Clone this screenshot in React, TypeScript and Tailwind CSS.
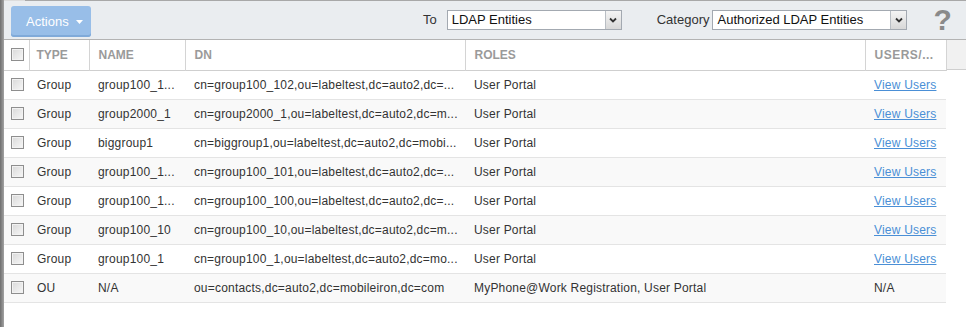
import React from "react";

const rows = [
  { type: "Group", name: "group100_1...", dn: "cn=group100_102,ou=labeltest,dc=auto2,dc=...", roles: "User Portal", link: true },
  { type: "Group", name: "group2000_1", dn: "cn=group2000_1,ou=labeltest,dc=auto2,dc=m...", roles: "User Portal", link: true },
  { type: "Group", name: "biggroup1", dn: "cn=biggroup1,ou=labeltest,dc=auto2,dc=mobi...", roles: "User Portal", link: true },
  { type: "Group", name: "group100_1...", dn: "cn=group100_101,ou=labeltest,dc=auto2,dc=...", roles: "User Portal", link: true },
  { type: "Group", name: "group100_1...", dn: "cn=group100_100,ou=labeltest,dc=auto2,dc=...", roles: "User Portal", link: true },
  { type: "Group", name: "group100_10", dn: "cn=group100_10,ou=labeltest,dc=auto2,dc=m...", roles: "User Portal", link: true },
  { type: "Group", name: "group100_1", dn: "cn=group100_1,ou=labeltest,dc=auto2,dc=mo...", roles: "User Portal", link: true },
  { type: "OU", name: "N/A", dn: "ou=contacts,dc=auto2,dc=mobileiron,dc=com", roles: "MyPhone@Work Registration, User Portal", link: false },
];

function Checkbox() {
  return (
    <div className="w-[13px] h-[13px] border border-[#8e8e8e] bg-gradient-to-br from-[#d9d9d9] to-[#f7f7f7] shadow-[inset_0_0_0_1px_#f2f2f2]" />
  );
}

function Select({ value, width }: { value: string; width: string }) {
  return (
    <div className={`flex h-[20px] border border-[#a3a9b1] bg-white ${width}`}>
      <div className="flex-1 pl-[4px] text-[13px] leading-[17px] text-[#111]">{value}</div>
      <div className="w-[16px] h-full border-l border-[#b9bec4] bg-gradient-to-b from-[#f4f4f4] to-[#d8d8d8] flex items-center justify-center">
        <svg width="8" height="6" viewBox="0 0 8 6">
          <path d="M1 1.5 L4 4.5 L7 1.5" stroke="#333" strokeWidth="1.8" fill="none" />
        </svg>
      </div>
    </div>
  );
}

export default function App() {
  return (
    <div className="w-[966px] h-[327px] bg-white flex overflow-hidden" style={{ fontFamily: '"Liberation Sans", Arial, sans-serif' }}>
      <div className="w-[4px] h-full bg-gradient-to-r from-[#6f6f6f] to-[#a3a3a3]" />
      <div className="flex-1 flex flex-col">
        <div className="h-[1px] flex">
          <div className="w-[21px] bg-[#dcdcdc]" />
          <div className="flex-1 bg-[#a8a8a8]" />
        </div>
        <div className="h-[39px] bg-[#eaedf0] flex items-center border-b border-[#b3b3b3]">
          <div className="ml-[7px] mt-[3px] w-[80px] h-[31px] rounded-[3px] bg-[#98bee8] shadow-[inset_0_-2px_0_#80aad9] flex items-center pl-[15px] text-white text-[13px]">
            Actions
            <svg className="ml-[7px]" width="7" height="4" viewBox="0 0 7 4">
              <path d="M0 0 L7 0 L3.5 4 Z" fill="#fff" />
            </svg>
          </div>
          <div className="ml-[332px] text-[13px] text-[#333]">To</div>
          <div className="ml-[10px]">
            <Select value="LDAP Entities" width="w-[175px]" />
          </div>
          <div className="ml-[35px] text-[13px] text-[#333]">Category</div>
          <div className="ml-[3px]">
            <Select value="Authorized LDAP Entities" width="w-[195px]" />
          </div>
          <div className="ml-[26px] text-[30px] font-bold text-[#8a8a8a] leading-none">?</div>
        </div>
        <div className="flex">
          <table className="table-fixed border-collapse w-[942px] text-[12px]">
            <colgroup>
              <col className="w-[25px]" />
              <col className="w-[60px]" />
              <col className="w-[96px]" />
              <col className="w-[280px]" />
              <col className="w-[400px]" />
              <col className="w-[81px]" />
            </colgroup>
            <thead>
              <tr className="h-[30px] border-b border-[#cfcfcf]">
                <th className="border-r border-[#d4d4d4] pl-[7px] text-left align-middle"><Checkbox /></th>
                <th className="border-r border-[#d4d4d4] pl-[7px] text-left font-bold text-[#9a9a9a]">TYPE</th>
                <th className="border-r border-[#d4d4d4] pl-[9px] text-left font-bold text-[#9a9a9a]">NAME</th>
                <th className="border-r border-[#d4d4d4] pl-[9px] text-left font-bold text-[#9a9a9a]">DN</th>
                <th className="border-r border-[#d4d4d4] pl-[9px] text-left font-bold text-[#9a9a9a]">ROLES</th>
                <th className="border-r border-[#d4d4d4] pl-[9px] text-left font-bold text-[#9a9a9a] tracking-[0.5px]">USERS/...</th>
              </tr>
            </thead>
            <tbody className="tracking-[0.2px]">
              {rows.map((r, i) => (
                <tr key={i} className={`h-[29px] border-b border-[#e4e4e4] ${i % 2 === 1 ? "bg-[#f9f9f9]" : "bg-white"}`}>
                  <td className="pl-[7px] align-middle"><Checkbox /></td>
                  <td className="pl-[8px] text-[#333] whitespace-nowrap overflow-hidden">{r.type}</td>
                  <td className="pl-[9px] text-[#333] whitespace-nowrap overflow-hidden">{r.name}</td>
                  <td className="pl-[9px] text-[#333] whitespace-nowrap overflow-hidden">{r.dn}</td>
                  <td className="pl-[9px] text-[#333] whitespace-nowrap overflow-hidden">{r.roles}</td>
                  <td className="pl-[9px] whitespace-nowrap overflow-hidden">
                    {r.link ? (
                      <span className="text-[#4a8fd6] underline">View Users</span>
                    ) : (
                      <span className="text-[#333]">N/A</span>
                    )}
                  </td>
                </tr>
              ))}
            </tbody>
          </table>
          <div className="flex-1 flex flex-col">
            <div className="h-[30px] bg-[#f1f1f1] border-b border-[#cfcfcf]" />
          </div>
        </div>
      </div>
    </div>
  );
}
